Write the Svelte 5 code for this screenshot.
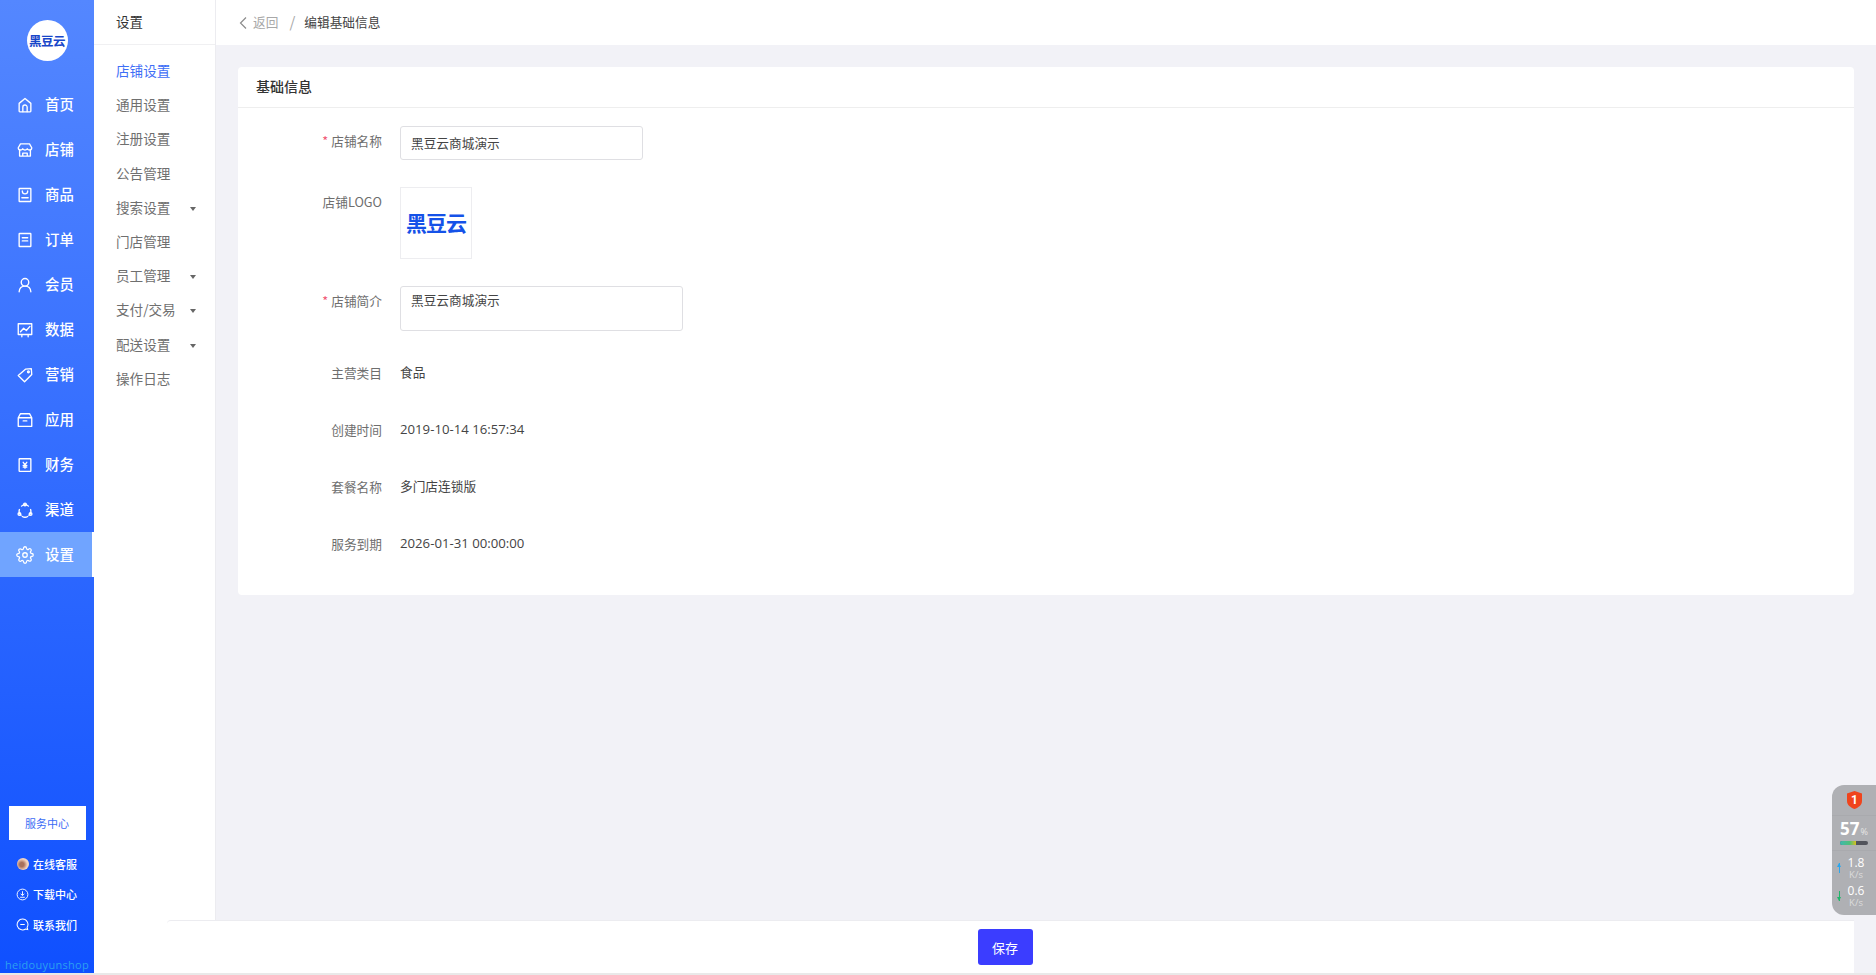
<script>
  const nav = [
    { name: "首页", icon: "home" },
    { name: "店铺", icon: "store" },
    { name: "商品", icon: "goods" },
    { name: "订单", icon: "order" },
    { name: "会员", icon: "user" },
    { name: "数据", icon: "chart" },
    { name: "营销", icon: "tag" },
    { name: "应用", icon: "box" },
    { name: "财务", icon: "money" },
    { name: "渠道", icon: "channel" },
    { name: "设置", icon: "gear", active: true },
  ];

  const sub = [
    { name: "店铺设置", active: true },
    { name: "通用设置" },
    { name: "注册设置" },
    { name: "公告管理" },
    { name: "搜索设置", arrow: true },
    { name: "门店管理" },
    { name: "员工管理", arrow: true },
    { name: "支付/交易", arrow: true },
    { name: "配送设置", arrow: true },
    { name: "操作日志" },
  ];

  const info = [
    { label: "主营类目", value: "食品" },
    { label: "创建时间", value: "2019-10-14 16:57:34", num: true },
    { label: "套餐名称", value: "多门店连锁版" },
    { label: "服务到期", value: "2026-01-31 00:00:00", num: true },
  ];
</script>

<div class="page">
  <aside class="sidebar">
    <div class="logo-wrap">
      <div class="logo">黑豆云</div>
    </div>
    <nav class="nav">
      {#each nav as item}
        <div class="nav-item" class:active={item.active}>
          <svg class="nav-icon" viewBox="0 0 20 20" fill="none" stroke="currentColor" stroke-width="1.5" stroke-linejoin="round" stroke-linecap="round">
            {#if item.icon === "home"}
              <path d="M3.5 8.2 10 2.8l6.5 5.4v8.6a.8.8 0 0 1-.8.8H4.3a.8.8 0 0 1-.8-.8z" />
              <path d="M7.6 17.4v-5a2.4 2.4 0 0 1 4.8 0v5" />
            {:else if item.icon === "store"}
              <path d="M5 3.2h10l2.5 4.3c0 1.5-1.1 2.5-2.5 2.5-1 0-1.9-.5-2.5-1.3-.6.8-1.5 1.3-2.5 1.3s-1.9-.5-2.5-1.3C6.9 9.5 6 10 5 10c-1.4 0-2.5-1-2.5-2.5z" />
              <path d="M4 10v6.8h12V10M7.5 16.8v-3.3h5v3.3" />
            {:else if item.icon === "goods"}
              <rect x="3.5" y="2.8" width="13" height="14.4" rx=".6" />
              <path d="M7 5.5c0 2 1.3 3.2 3 3.2s3-1.2 3-3.2M6.5 13h7" />
            {:else if item.icon === "order"}
              <rect x="3.5" y="2.8" width="13" height="14.4" rx=".6" />
              <path d="M7 7.5h6M7 11h6" />
            {:else if item.icon === "user"}
              <circle cx="10" cy="7" r="4.2" />
              <path d="M3.5 17.5c.3-3.7 2.900-6.300 6.500-6.300s6.200 2.600 6.500 6.300" />
            {:else if item.icon === "chart"}
              <path d="M2.500 3h15v12h-15zM6.500 15v2.500M13.500 15v2.500" />
              <path d="M5 12l3.500-4 3 2.500L15.500 6" />
            {:else if item.icon === "tag"}
              <path d="M10.500 3.500 17 3l.5 6.500-8 8-7-7z" />
              <circle cx="13.800" cy="6.500" r="1" />
            {:else if item.icon === "box"}
              <path d="M5 3h10l2.500 4.500v9.500h-15V7.500zM2.500 7.500h15M8 11h4" />
            {:else if item.icon === "money"}
              <rect x="3.500" y="3" width="13" height="14" rx=".6" />
              <path d="M8 7l2 2.500L12 7M10 9.500V13.500M8 10.500h4M8 12.300h4" />
            {:else if item.icon === "channel"}
              <path d="M6.200 5.700a5.500 5.500 0 0 1 7.600 0M16.200 9.500a6 6 0 0 1-1.800 6.400M5.600 15.900a6 6 0 0 1-1.800-6.400" />
              <circle cx="10" cy="3.800" r="1.500" />
              <circle cx="3.800" cy="14.500" r="1.500" />
              <circle cx="16.200" cy="14.500" r="1.500" />
              <path d="M7 17.200a6 6 0 0 0 6 0" />
            {:else}
              <g transform="scale(.8333)" stroke-width="1.7">
                <circle cx="12" cy="12" r="3" />
                <path d="M19.4 15a1.65 1.65 0 0 0 .33 1.82l.06.06a2 2 0 0 1 0 2.83 2 2 0 0 1-2.83 0l-.06-.06a1.65 1.65 0 0 0-1.82-.33 1.65 1.65 0 0 0-1 1.51V21a2 2 0 0 1-2 2 2 2 0 0 1-2-2v-.09A1.65 1.65 0 0 0 9 19.4a1.65 1.65 0 0 0-1.82.33l-.06.06a2 2 0 0 1-2.83 0 2 2 0 0 1 0-2.83l.06-.06a1.65 1.65 0 0 0 .33-1.82 1.65 1.65 0 0 0-1.51-1H3a2 2 0 0 1-2-2 2 2 0 0 1 2-2h.09A1.65 1.65 0 0 0 4.6 9a1.65 1.65 0 0 0-.33-1.82l-.06-.06a2 2 0 0 1 0-2.83 2 2 0 0 1 2.83 0l.06.06a1.65 1.65 0 0 0 1.82.33H9a1.65 1.65 0 0 0 1-1.51V3a2 2 0 0 1 2-2 2 2 0 0 1 2 2v.09a1.65 1.65 0 0 0 1 1.51 1.65 1.65 0 0 0 1.82-.33l.06-.06a2 2 0 0 1 2.83 0 2 2 0 0 1 0 2.83l-.06.06a1.65 1.65 0 0 0-.33 1.82V9a1.65 1.65 0 0 0 1.51 1H21a2 2 0 0 1 2 2 2 2 0 0 1-2 2h-.09a1.65 1.65 0 0 0-1.51 1z" />
              </g>
            {/if}
          </svg>
          <span>{item.name}</span>
        </div>
      {/each}
    </nav>

    <div class="side-bottom">
      <div class="service-btn">服务中心</div>
      <div class="side-link">
        <span class="avatar"></span>
        <span>在线客服</span>
      </div>
      <div class="side-link">
        <svg class="link-icon" viewBox="0 0 14 14" fill="none" stroke="currentColor" stroke-width="1">
          <circle cx="7" cy="7" r="5.8" />
          <path d="M7 3.5v4.500M5 6.300 7 8l2-1.700M4.500 10h5" />
        </svg>
        <span>下载中心</span>
      </div>
      <div class="side-link">
        <svg class="link-icon" viewBox="0 0 14 14" fill="none" stroke="currentColor" stroke-width="1.1">
          <path d="M7 1.200a5.800 5.800 0 1 0 3.300 10.600l2.300.7-.6-2.500A5.800 5.800 0 0 0 7 1.200z" />
          <path d="M4.600 7h4.800" />
        </svg>
        <span>联系我们</span>
      </div>
      <div class="brand">heidouyunshop</div>
    </div>
  </aside>

  <div class="subnav">
    <div class="subnav-title">设置</div>
    <ul class="subnav-list">
      {#each sub as item}
        <li class:active={item.active}>
          <span>{item.name}</span>
          {#if item.arrow}<i class="caret"></i>{/if}
        </li>
      {/each}
    </ul>
  </div>

  <main class="main">
    <header class="topbar">
      <svg class="back" viewBox="0 0 10 14" fill="none" stroke="#8c8c8c" stroke-width="1.2">
        <path d="M8 1.500 2.500 7 8 12.500" />
      </svg>
      <span class="back-text">返回</span>
      <span class="sep">/</span>
      <span class="crumb">编辑基础信息</span>
    </header>

    <div class="content">
      <section class="card">
        <h2 class="card-title">基础信息</h2>
        <div class="form">
          <div class="row row-wide">
            <div class="label"><em>*</em>店铺名称</div>
            <div class="input">黑豆云商城演示</div>
          </div>
          <div class="row row-wide">
            <div class="label">店铺LOGO</div>
            <div class="logo-box"><span>黑豆云</span></div>
          </div>
          <div class="row row-area">
            <div class="label"><em>*</em>店铺简介</div>
            <div class="textarea">黑豆云商城演示</div>
          </div>
          {#each info as row}
            <div class="row row-text">
              <div class="label">{row.label}</div>
              <div class="value" class:num={row.num}>{row.value}</div>
            </div>
          {/each}
        </div>
      </section>
    </div>
  </main>

  <div class="footer-bar">
    <button class="save">保存</button>
  </div>

  <div class="widget">
    <div class="shield-row">
      <svg width="15" height="18" viewBox="0 0 15 18">
        <path d="M7.500 0 15 2.500V10c0 4-3.500 6.500-7.500 8C3.500 16.500 0 14 0 10V2.500z" fill="#f0441c" />
        <text x="7.500" y="13" text-anchor="middle" font-size="12" font-weight="700" fill="#fff" font-family="Roboto, sans-serif">1</text>
      </svg>
    </div>
    <div class="cpu">
      <div class="cpu-num">57<small>%</small></div>
      <div class="meter"><i></i></div>
    </div>
    <div class="speeds">
      <div class="speed">
        <span class="arrow up"></span>
        <div class="speed-text">1.8<small>K/s</small></div>
      </div>
      <div class="speed">
        <span class="arrow down"></span>
        <div class="speed-text">0.6<small>K/s</small></div>
      </div>
    </div>
  </div>
</div>

<style>
  :global(body) {
    margin: 0;
    background: #e9e9e9;
    font-family: "Noto Sans CJK SC", "Open Sans", sans-serif;
  }

  .page {
    position: relative;
    display: flex;
    height: 973px;
    overflow: hidden;
  }

  .sidebar {
    width: 94px;
    flex: none;
    display: flex;
    flex-direction: column;
    background: linear-gradient(180deg, #5487ff 0%, #0f50ff 100%);
    color: #fff;
  }

  .logo-wrap {
    height: 82px;
    display: flex;
    align-items: center;
    justify-content: center;
  }

  .logo {
    width: 41px;
    height: 41px;
    margin-top: -2px;
    border-radius: 50%;
    background: #fff;
    color: #1746c9;
    font-size: 12.5px;
    font-weight: 700;
    letter-spacing: -0.5px;
    line-height: 41px;
    text-align: center;
  }

  .nav-item {
    height: 45px;
    display: flex;
    align-items: center;
    padding-left: 15.500px;
    box-sizing: border-box;
    font-size: 14.4px;
    font-weight: 500;
    line-height: 43px;
    color: #fff;
  }

  .nav-item span {
    margin-top: -2px;
  }

  .nav-item.active {
    background: #70a4ff;
    border-right: 2px solid #fff;
  }

  .nav-icon {
    width: 18px;
    height: 18px;
    margin-right: 11.500px;
  }

  .side-bottom {
    margin-top: auto;
    display: flex;
    flex-direction: column;
    align-items: center;
    padding-bottom: 1px;
  }

  .service-btn {
    width: 77px;
    height: 34px;
    margin-bottom: 9px;
    background: #fff;
    color: #3b6cf5;
    font-size: 11px;
    line-height: 34px;
    text-align: center;
  }

  .side-link {
    height: 30.5px;
    display: flex;
    align-items: center;
    gap: 4px;
    font-size: 11px;
    font-weight: 500;
    color: #fff;
  }

  .avatar {
    width: 12px;
    height: 12px;
    border-radius: 50%;
    background: radial-gradient(circle at 40% 55%, #a8705c 0 22%, #f0cdb8 55%, #f8ece4 100%);
  }

  .link-icon {
    width: 13px;
    height: 13px;
    margin-left: -1px;
  }

  .brand {
    margin-top: 17px;
    font-family: "Open Sans", sans-serif;
    font-size: 11px;
    letter-spacing: 0.3px;
    line-height: 15px;
    color: #2ba0f0;
  }

  .subnav {
    width: 122px;
    flex: none;
    box-sizing: border-box;
    background: #fff;
    border-right: 1px solid #ececf0;
  }

  .subnav-title {
    height: 45px;
    box-sizing: border-box;
    padding-left: 22px;
    border-bottom: 1px solid #f0f0f2;
    font-size: 13.4px;
    line-height: 42px;
    color: #333;
  }

  .subnav-list {
    list-style: none;
    margin: 0;
    padding: 8px 0 0 22px;
  }

  .subnav-list li {
    height: 34.2px;
    display: flex;
    align-items: center;
    font-size: 13.6px;
    color: #6f6f6f;
    position: relative;
  }

  .subnav-list li.active {
    color: #3f6ff6;
  }

  .caret {
    position: absolute;
    left: 74px;
    top: 17px;
    width: 0;
    height: 0;
    border-left: 3.5px solid transparent;
    border-right: 3.5px solid transparent;
    border-top: 4px solid #666;
  }

  .main {
    flex: 1;
    min-width: 0;
    display: flex;
    flex-direction: column;
    background: #f2f2f7;
  }

  .topbar {
    height: 45px;
    flex: none;
    display: flex;
    align-items: center;
    padding-left: 22px;
    padding-bottom: 2px;
    box-sizing: border-box;
    background: #fff;
    font-size: 12.7px;
  }

  .back {
    width: 10px;
    height: 14px;
    margin-right: 5px;
    margin-top: 3px;
  }

  .back-text {
    color: #a8a8a8;
  }

  .sep {
    margin: 0 9px 0 11px;
    color: #a8a8a8;
    font-size: 15px;
  }

  .crumb {
    color: #444;
  }

  .content {
    padding: 22px 22px 0 22px;
  }

  .card {
    background: #fff;
    border-radius: 4px;
    height: 528px;
  }

  .card-title {
    margin: 0;
    height: 41px;
    box-sizing: border-box;
    padding-left: 18px;
    border-bottom: 1px solid #eeeeee;
    font-size: 14px;
    font-weight: 500;
    line-height: 38px;
    color: #333;
  }

  .form {
    padding-top: 18px;
  }

  .row {
    display: flex;
    margin-bottom: 23px;
    font-size: 12.7px;
  }

  .row-wide {
    margin-bottom: 27px;
  }

  .row-area {
    margin-bottom: 25px;
  }

  .label {
    width: 144px;
    margin-right: 18px;
    flex: none;
    text-align: right;
    color: #6e6e6e;
    line-height: 30px;
  }

  .label em {
    font-style: normal;
    color: #f0506e;
    margin-right: 3px;
  }

  .input,
  .textarea {
    box-sizing: border-box;
    border: 1px solid #dfdfe3;
    border-radius: 3px;
    padding-left: 10px;
    color: #444;
  }

  .input {
    width: 243px;
    height: 34px;
    line-height: 31px;
  }

  .textarea {
    width: 283px;
    height: 45px;
    line-height: 25px;
  }

  .logo-box {
    box-sizing: border-box;
    width: 72px;
    height: 72px;
    padding-bottom: 2px;
    border: 1px solid #ededf0;
    display: flex;
    align-items: center;
    justify-content: center;
    color: #1552e8;
    font-size: 21px;
    font-weight: 700;
    letter-spacing: -1px;
    white-space: nowrap;
  }

  .row-text {
    height: 34px;
    align-items: center;
  }

  .row-text .label {
    line-height: 34px;
  }

  .value {
    color: #444;
    font-size: 12.7px;
    padding-bottom: 3px;
  }

  .value.num {
    font-family: "Open Sans", sans-serif;
    font-size: 13.2px;
    padding-bottom: 2px;
  }

  .footer-bar {
    position: absolute;
    left: 167px;
    right: 22px;
    bottom: 0;
    height: 53px;
    background: #fff;
    border-top: 1px solid #ececf0;
    box-sizing: border-box;
    border-top-left-radius: 4px;
    display: flex;
    justify-content: center;
    align-items: center;
  }

  .save {
    width: 55px;
    height: 36px;
    padding: 0;
    border: none;
    border-radius: 3px;
    background: #3b3dff;
    color: #fff;
    font-family: inherit;
    font-size: 13px;
    margin-right: 11px;
  }

  .widget {
    position: absolute;
    right: 0;
    top: 785px;
    width: 44px;
    height: 130px;
    border-radius: 12px 0 0 12px;
    background: #afb0b4;
    color: #fff;
    font-family: "Open Sans", sans-serif;
    text-align: center;
  }

  .shield-row {
    height: 30px;
    display: flex;
    align-items: center;
    justify-content: center;
    border-bottom: 1px solid #a9aaae;
  }

  .cpu {
    height: 35px;
    border-bottom: 1px solid #a9aaae;
    box-sizing: border-box;
    padding-top: 3px;
  }

  .cpu-num {
    font-size: 17px;
    font-weight: 700;
    line-height: 19px;
  }

  .cpu-num small {
    font-size: 9px;
    font-weight: 400;
    margin-left: 1px;
    color: #e6e6e6;
  }

  .meter {
    width: 28px;
    height: 4px;
    margin: 0 auto;
    border-radius: 2px;
    background: #52545c;
    overflow: hidden;
  }

  .meter i {
    display: block;
    width: 57%;
    height: 100%;
    background: linear-gradient(90deg, #3fb8b0, #4fbf7a 60%, #d8c020);
  }

  .speeds {
    padding-top: 3px;
  }

  .speed {
    height: 28px;
    display: flex;
    align-items: center;
    padding-left: 7px;
  }

  .arrow {
    width: 1px;
    height: 10px;
    position: relative;
    flex: none;
  }

  .arrow.up {
    background: #2aa6ee;
  }

  .arrow.down {
    background: #1fb56a;
  }

  .arrow::after {
    content: "";
    position: absolute;
    left: -2px;
    border-left: 2.5px solid transparent;
    border-right: 2.5px solid transparent;
  }

  .arrow.up::after {
    top: 0;
    border-bottom: 4px solid #2aa6ee;
  }

  .arrow.down::after {
    bottom: 0;
    border-top: 4px solid #1fb56a;
  }

  .speed-text {
    flex: 1;
    padding-right: 4px;
    font-size: 12px;
    line-height: 12px;
  }

  .speed-text small {
    display: block;
    font-size: 9.5px;
    line-height: 11px;
    color: #dcdcdc;
  }
</style>
